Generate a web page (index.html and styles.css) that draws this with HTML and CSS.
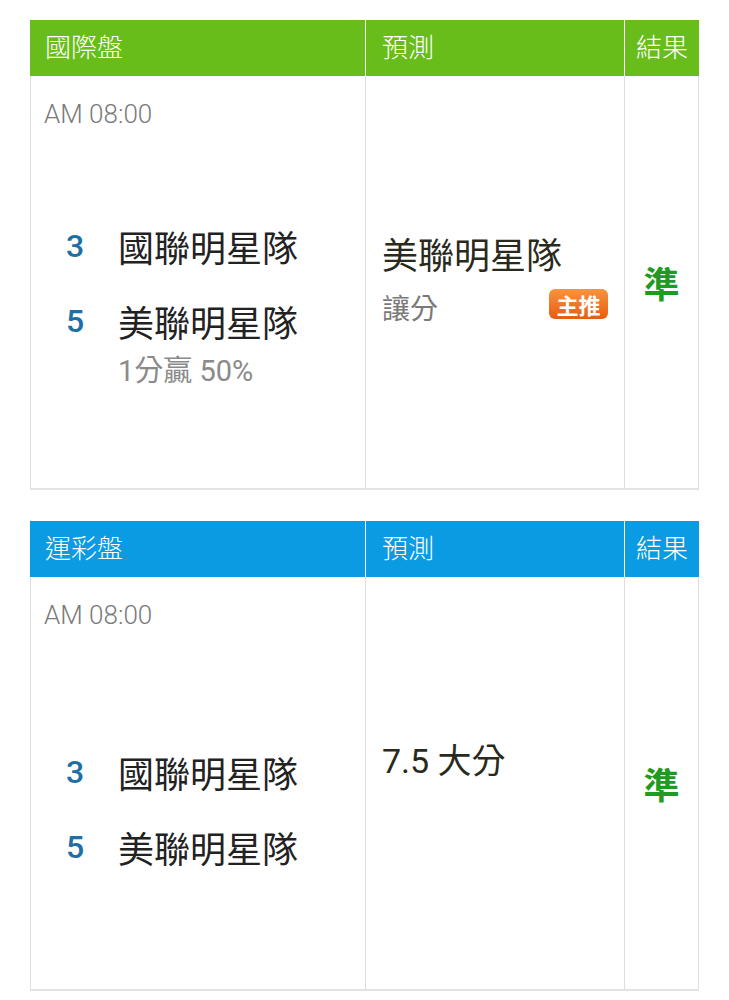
FILE: index.html
```html
<!DOCTYPE html>
<html lang="zh-Hant">
<head>
<meta charset="utf-8">
<title>預測</title>
<link rel="stylesheet" href="styles.css">
</head>
<body>
<div class="page">
  <section class="board">
    <div class="head head-green">
      <div class="hcell">國際盤</div>
      <div class="hcell">預測</div>
      <div class="hcell center">結果</div>
    </div>
    <div class="body">
      <div class="cell match">
        <div class="time">AM 08:00</div>
        <div class="teams">
          <div class="team"><span class="num">3</span><span class="name">國聯明星隊</span></div>
          <div class="team"><span class="num">5</span><span class="name">美聯明星隊</span></div>
          <div class="sub">1分贏 50%</div>
        </div>
      </div>
      <div class="cell pick">
        <div class="pick-block">
          <div class="pick-name">美聯明星隊</div>
          <div class="pick-sub"><span class="pick-type">讓分</span><span class="badge">主推</span></div>
        </div>
      </div>
      <div class="cell result"><span class="hit">準</span></div>
    </div>
  </section>

  <section class="board">
    <div class="head head-blue">
      <div class="hcell">運彩盤</div>
      <div class="hcell">預測</div>
      <div class="hcell center">結果</div>
    </div>
    <div class="body">
      <div class="cell match">
        <div class="time">AM 08:00</div>
        <div class="teams">
          <div class="team"><span class="num">3</span><span class="name">國聯明星隊</span></div>
          <div class="team"><span class="num">5</span><span class="name">美聯明星隊</span></div>
        </div>
      </div>
      <div class="cell pick">
        <div class="pick-block">
          <div class="pick-name pick-total">7.5 大分</div>
          <div class="pick-sub"></div>
        </div>
      </div>
      <div class="cell result"><span class="hit">準</span></div>
    </div>
  </section>
</div>
</body>
</html>
```

FILE: styles.css
```css
* { box-sizing: border-box; }

html, body {
  margin: 0;
  padding: 0;
  background: #ffffff;
}

body {
  font-family: Roboto, "Noto Sans CJK TC", sans-serif;
  color: #222222;
}

.page {
  padding: 20px 30px 0 30px;
  display: flex;
  flex-direction: column;
  gap: 31px;
}

.board {
  width: 669px;
}

.head {
  display: grid;
  grid-template-columns: 335px 259px 75px;
  height: 56px;
  color: #ffffff;
}

.head-green { background: #68bd1a; }
.head-blue { background: #0a9be3; }

.hcell {
  display: flex;
  align-items: center;
  padding-left: 15px;
  font-size: 26px;
  font-weight: 300;
  line-height: 1;
}

.hcell + .hcell {
  border-left: 1.5px solid #ffffff;
  padding-left: 16px;
}

.hcell.center {
  justify-content: center;
  padding-left: 0;
}

.body {
  display: grid;
  grid-template-columns: 334px 259px 1fr;
  height: 414px;
  border-left: 1px solid #dedede;
  border-right: 1px solid #dedede;
  border-bottom: 2px solid #e3e3e3;
}

.cell + .cell {
  border-left: 1px solid #dedede;
}

.match {
  display: flex;
  flex-direction: column;
  padding-top: 20px;
}

.time {
  padding-left: 13px;
  font-size: 26px;
  line-height: 36px;
  color: #7a7a7a;
  font-weight: 300;
}

.teams {
  flex: 1;
  display: flex;
  flex-direction: column;
  justify-content: center;
  gap: 25px;
  padding-bottom: 4px;
}

.team {
  display: flex;
  align-items: center;
  height: 50px;
  padding-left: 35px;
}

.num {
  width: 52px;
  font-size: 32px;
  font-weight: 500;
  color: #1e6fa3;
}

.name {
  font-size: 36px;
  color: #222222;
}

.sub {
  margin-top: -25px;
  padding-left: 87px;
  height: 50px;
  line-height: 50px;
  font-size: 29px;
  color: #8a8a8a;
}

.pick {
  display: flex;
  align-items: center;
  padding: 0 16px;
}

.pick-block {
  width: 100%;
}

.pick-name {
  height: 50px;
  line-height: 50px;
  font-size: 36px;
  color: #2a2a1c;
}

.pick-total {
  font-size: 34px;
  line-height: 56px;
}

.pick-sub {
  height: 50px;
  display: flex;
  align-items: center;
  justify-content: space-between;
}

.pick-type {
  font-size: 28px;
  color: #7a7a7a;
}

.badge {
  display: inline-flex;
  align-items: center;
  justify-content: center;
  width: 59px;
  height: 30px;
  border-radius: 6px;
  background: linear-gradient(#f8943f, #e85c10);
  color: #ffffff;
  font-size: 22px;
  font-weight: 700;
  margin-top: -6px;
}

.result {
  display: flex;
  align-items: center;
  justify-content: center;
}

.hit {
  font-size: 36px;
  font-weight: 700;
  color: #1f9a22;
}
```
